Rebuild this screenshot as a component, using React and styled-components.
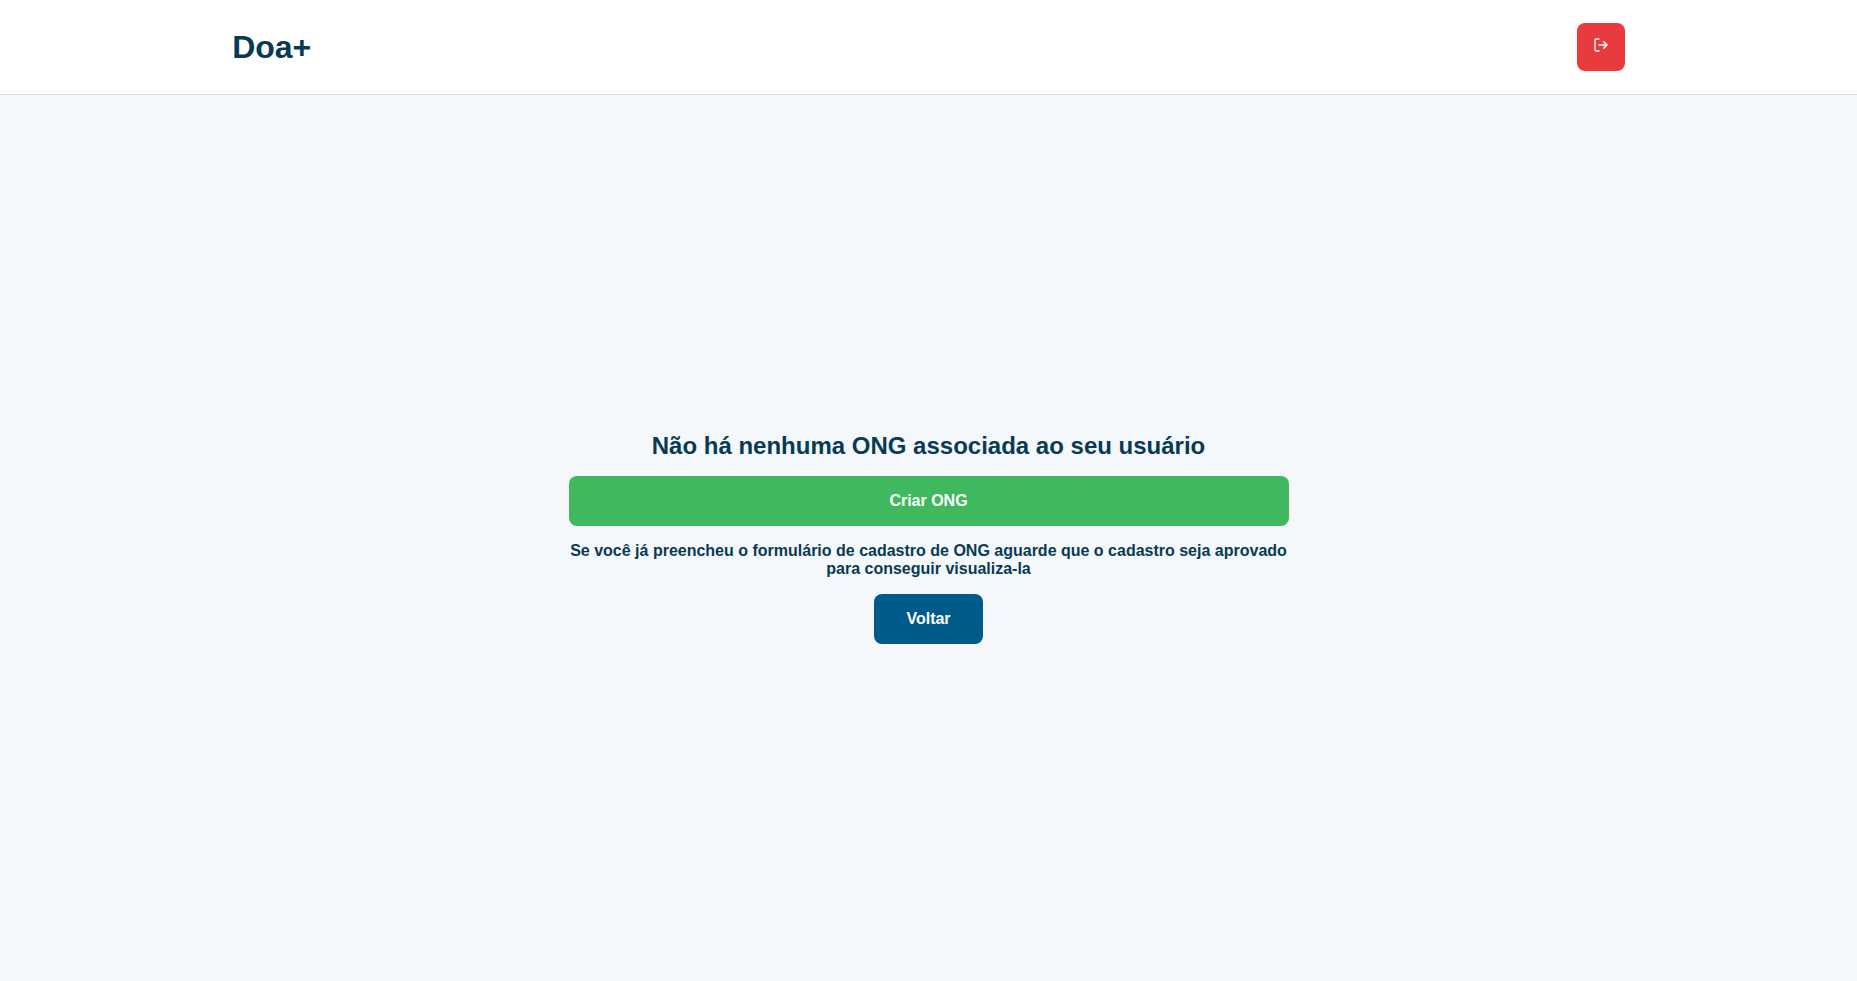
import React from "react";
import styled, { createGlobalStyle } from "styled-components";
import { FiLogOut } from "react-icons/fi";

const GlobalStyle = createGlobalStyle`
  * { margin: 0; padding: 0; box-sizing: border-box; }
  body {
    background: #f4f8fb;
    color: #083a54;
    font-family: "Liberation Sans", Arial, sans-serif;
  }
`;

const Page = styled.div`
  min-height: 100vh;
  display: flex;
  flex-direction: column;
`;

const Header = styled.header`
  background: #fff;
  border-bottom: 1px solid #d6dfe5;
  padding: 23px 0;
`;

const HeaderContent = styled.div`
  width: 75%;
  margin: 0 auto;
  display: flex;
  align-items: center;
  justify-content: space-between;
`;

const Logo = styled.h1`
  font-size: 32px;
  line-height: normal;
`;

const Button = styled.button`
  border: 0;
  border-radius: 8px;
  background: ${({ $color }) => $color};
  color: #fff;
  font: bold 16px/18px "Liberation Sans", Arial, sans-serif;
  padding: ${({ $compact }) => ($compact ? "14px 16px" : "16px 32px")};
  align-self: ${({ $wide }) => ($wide ? "stretch" : "center")};
  cursor: pointer;
`;

const Main = styled.main`
  flex: 1;
  display: flex;
  align-items: center;
  justify-content: center;
`;

const Notice = styled.section`
  width: 720px;
  max-width: 100%;
  display: flex;
  flex-direction: column;
  gap: 16px;
  text-align: center;
`;

const Title = styled.h2`
  font-size: 24px;
  line-height: 28px;
`;

const Hint = styled.p`
  font-size: 16px;
  font-weight: bold;
  line-height: 18px;
`;

export default function App() {
  return (
    <Page>
      <GlobalStyle />
      <Header>
        <HeaderContent>
          <Logo>Doa+</Logo>
          <Button $color="#e83b3e" $compact aria-label="Sair">
            <FiLogOut />
          </Button>
        </HeaderContent>
      </Header>
      <Main>
        <Notice>
          <Title>Não há nenhuma ONG associada ao seu usuário</Title>
          <Button $color="#40b95e" $wide>Criar ONG</Button>
          <Hint>
            Se você já preencheu o formulário de cadastro de ONG aguarde que o
            cadastro seja aprovado para conseguir visualiza-la
          </Hint>
          <Button $color="#005b8a">Voltar</Button>
        </Notice>
      </Main>
    </Page>
  );
}
